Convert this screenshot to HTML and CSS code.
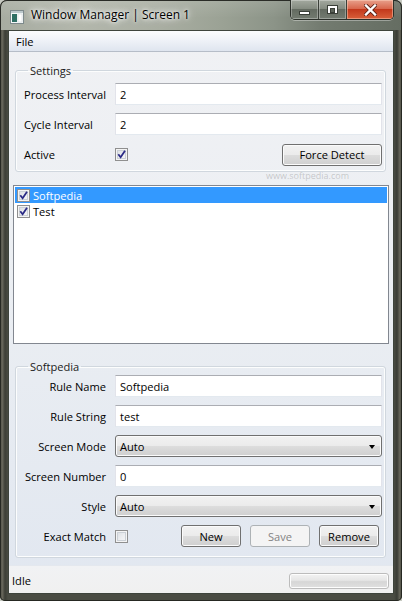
FILE: index.html
```html
<!DOCTYPE html>
<html>
<head>
<meta charset="utf-8">
<title>Window Manager | Screen 1</title>
<link rel="stylesheet" href="styles.css">
</head>
<body>
<div class="window">
  <div class="titlebar">
    <svg class="appicon" width="14" height="14" viewBox="0 0 14 14">
      <rect x="0.5" y="0.5" width="13" height="13" fill="#f4f7f8" stroke="#7d8a8c"/>
      <rect x="1" y="1" width="12" height="2" fill="#bcc8cc"/>
      <rect x="2" y="4" width="5" height="8" fill="#2f6f64"/>
      <rect x="8" y="4" width="4" height="8" fill="#ffffff" stroke="#c9d3d6" stroke-width="0.5"/>
    </svg>
    <span class="title">Window Manager | Screen 1</span>
    <div class="caption">
      <div class="cbtn min"><span class="glyph-min"></span></div>
      <div class="cbtn max"><span class="glyph-max"></span></div>
      <div class="cbtn close">
        <svg width="13" height="12" viewBox="0 0 13 12">
          <path d="M2 1.5 L11 10.5 M11 1.5 L2 10.5" stroke="#5b2217" stroke-width="4" stroke-linecap="square"/>
          <path d="M2 1.5 L11 10.5 M11 1.5 L2 10.5" stroke="#ffffff" stroke-width="2.4" stroke-linecap="square"/>
        </svg>
      </div>
    </div>
  </div>

  <div class="client">
    <div class="menubar"><span class="menuitem">File</span></div>

    <div class="content">
      <fieldset class="group settings">
        <legend>Settings</legend>
        <div class="form">
          <span class="label">Process Interval</span>
          <div class="textbox">2</div>
          <span class="label">Cycle Interval</span>
          <div class="textbox">2</div>
          <span class="label">Active</span>
          <div class="cellrow">
            <span class="check"><svg width="9" height="9" viewBox="0 0 9 9"><path d="M1.3 4.3 L3.6 7.2 L8 0.8" fill="none" stroke="#2b2b86" stroke-width="1.8"/></svg></span>
            <span class="btn force">Force Detect</span>
          </div>
        </div>
      </fieldset>

      <div class="listbox">
        <div class="item selected">
          <span class="check"><svg width="9" height="9" viewBox="0 0 9 9"><path d="M1.3 4.3 L3.6 7.2 L8 0.8" fill="none" stroke="#2b2b86" stroke-width="1.8"/></svg></span>
          <span>Softpedia</span>
        </div>
        <div class="item">
          <span class="check"><svg width="9" height="9" viewBox="0 0 9 9"><path d="M1.3 4.3 L3.6 7.2 L8 0.8" fill="none" stroke="#2b2b86" stroke-width="1.8"/></svg></span>
          <span>Test</span>
        </div>
      </div>

      <fieldset class="group rule">
        <legend>Softpedia</legend>
        <div class="form right">
          <span class="label">Rule Name</span>
          <div class="textbox">Softpedia</div>
          <span class="label">Rule String</span>
          <div class="textbox">test</div>
          <span class="label">Screen Mode</span>
          <div class="combo"><span>Auto</span><span class="arrow"></span></div>
          <span class="label">Screen Number</span>
          <div class="textbox">0</div>
          <span class="label">Style</span>
          <div class="combo"><span>Auto</span><span class="arrow"></span></div>
          <span class="label">Exact Match</span>
          <div class="cellrow">
            <span class="check"></span>
            <div class="buttons">
              <span class="btn">New</span>
              <span class="btn disabled">Save</span>
              <span class="btn">Remove</span>
            </div>
          </div>
        </div>
      </fieldset>
    </div>

    <div class="statusbar">
      <span>Idle</span>
      <div class="progress"></div>
    </div>
  </div>
  <span class="watermark">www.softpedia.com</span>
</div>
</body>
</html>
```

FILE: styles.css
```css
* { box-sizing: border-box; }
html, body { margin: 0; padding: 0; }
body {
  width: 402px;
  height: 601px;
  overflow: hidden;
  background: #c7cac2;
  font-family: "Open Sans", "Noto Sans", "Liberation Sans", sans-serif;
  font-size: 11.1px;
  line-height: 15px;
  color: #000;
}

.window {
  position: relative;
  width: 402px;
  height: 601px;
  display: flex;
  flex-direction: column;
  padding: 0 8px 7px;
  border-radius: 7px 7px 5px 5px;
  background: linear-gradient(to right, #2f302a 0, #6d6c60 2px, #3c3e36 5px, #4a4c43 8px, #4a4c43 394px, #3a3c35 397px, #6a695d 400px, #2f302a 402px);
  box-shadow: inset 0 0 0 1px #262822;
  overflow: hidden;
}

/* ---------- title bar ---------- */
.titlebar {
  height: 30px;
  margin: 0 -8px;
  padding: 0 8px;
  display: flex;
  align-items: flex-start;
  border-radius: 7px 7px 0 0;
  background:
    linear-gradient(to bottom, rgba(255,255,255,0.12), rgba(0,0,0,0) 60%),
    linear-gradient(to right, #a7aca1 0%, #b3b7ac 20%, #a9aea2 40%, #9ba295 55%, #8c9488 68%, #737b70 80%, #656d62 100%);
  box-shadow: inset 0 1px 0 #2a2c27, inset 1px 0 0 #2a2c27, inset -1px 0 0 #2a2c27;
}
.appicon { margin: 10px 0 0 2px; flex: none; }
.title {
  margin: 7px 0 0 7px;
  font-size: 12px;
  line-height: 16px;
  color: #000;
  text-shadow: 0 0 6px rgba(255,255,255,0.95), 0 0 10px rgba(255,255,255,0.8), 0 0 3px rgba(255,255,255,0.9);
}
.caption {
  margin-left: auto;
  display: flex;
  height: 20px;
  border: 1px solid #2c302a;
  border-top: none;
  border-radius: 0 0 5px 5px;
  overflow: hidden;
  box-shadow: 0 1px 0 rgba(255,255,255,0.35);
}
.cbtn {
  height: 100%;
  display: flex;
  align-items: center;
  justify-content: center;
}
.cbtn.min, .cbtn.max {
  width: 28px;
  background: linear-gradient(to bottom, #a3a99f 0%, #858c81 45%, #646b61 50%, #737b70 100%);
  border-right: 1px solid #3b4039;
  box-shadow: inset 0 0 0 1px rgba(255,255,255,0.3);
}
.cbtn.close {
  width: 46px;
  background: linear-gradient(to bottom, #e8a08b 0%, #d8684e 45%, #c3391c 50%, #d9603a 100%);
  box-shadow: inset 0 0 0 1px rgba(255,220,200,0.45);
}
.glyph-min {
  width: 11px;
  height: 4px;
  margin-top: 7px;
  background: #fff;
  border: 1px solid #3a3f38;
}
.glyph-max {
  width: 11px;
  height: 9px;
  border: 1px solid #3a3f38;
  background: #fff;
  box-shadow: inset 0 0 0 1px #fff;
}
.glyph-max::after {
  content: "";
  display: block;
  margin: 2px 2px 0;
  height: 3px;
  background: #5d645a;
  border: 1px solid #3a3f38;
}

/* ---------- client ---------- */
.client {
  flex: 1;
  display: flex;
  flex-direction: column;
  border: 1px solid #3e443c;
  background: linear-gradient(to bottom, #f0f1f4 0%, #eceff3 40%, #e1e7f0 100%);
}
.menubar {
  height: 21px;
  flex: none;
  padding-left: 7px;
  display: flex;
  align-items: center;
  background: linear-gradient(to bottom, #fbfcfd 0%, #eef1f7 50%, #dfe5ef 100%);
  border-bottom: 1px solid #b6bdc8;
}

.content {
  display: flex;
  flex-direction: column;
}

/* group boxes */
.group {
  margin: 0 7px 0 6px;
  padding: 0;
  border: 1px solid #d0d7de;
  border-radius: 3px;
  box-shadow: inset 0 0 0 1px #fcfdfd;
  min-width: 0;
}
.group legend {
  margin-left: 4px;
  padding: 0 2px;
  line-height: 15px;
  color: #1a1a1a;
}
.group.settings { margin-top: 11px; padding: 5px 0 6px 8px; }
.group.rule { margin-top: 15px; padding: 1px 0 10px 8px; }

.form {
  display: grid;
  grid-template-columns: 91px 267px;
  grid-auto-rows: 22px;
  row-gap: 8px;
  align-items: center;
}
.label { white-space: nowrap; }
.settings .form > :nth-child(5), .settings .form > :nth-child(6) { margin-top: 1px; }
.form.right .label { text-align: right; padding-right: 9px; direction: rtl; }

.textbox {
  height: 22px;
  padding: 0 4px;
  display: flex;
  align-items: center;
  background: #fff;
  border: 1px solid #e2e3ea;
  border-top-color: #abadb3;
  border-bottom-color: #e3e9ef;
}

.cellrow {
  height: 22px;
  display: flex;
  align-items: center;
  justify-content: space-between;
}

.check {
  width: 13px;
  height: 13px;
  flex: none;
  display: flex;
  align-items: center;
  justify-content: center;
  border: 1px solid #8f8f8f;
  box-shadow: inset 0 0 0 1px #f4f4f4, inset 0 0 0 2px #cbd0d6;
  background-image: linear-gradient(135deg, #d7dbe1 0%, #eeeff1 60%, #f7f7f8 100%);
}
.check svg { display: block; }

.btn {
  height: 22px;
  display: flex;
  align-items: center;
  justify-content: center;
  border: 1px solid #707070;
  border-radius: 3px;
  background: linear-gradient(to bottom, #f2f2f2 0%, #ebebeb 50%, #dddddd 50%, #cfcfcf 100%);
  box-shadow: inset 0 0 0 1px #fbfbfb;
}
.btn.force { width: 100px; }
.btn.disabled {
  border-color: #adb2b5;
  background: #f4f4f4;
  color: #838383;
  box-shadow: none;
}
.buttons {
  display: flex;
  gap: 9px;
  padding-right: 3px;
}
.buttons .btn { width: 60px; }

.combo {
  height: 22px;
  display: flex;
  align-items: center;
  justify-content: space-between;
  padding: 0 6px 0 4px;
  border: 1px solid #707070;
  border-radius: 3px;
  background: linear-gradient(to bottom, #f2f2f2 0%, #ebebeb 50%, #dddddd 50%, #cfcfcf 100%);
  box-shadow: inset 0 0 0 1px #fbfbfb;
}
.arrow {
  width: 0;
  height: 0;
  border-left: 3.5px solid transparent;
  border-right: 3.5px solid transparent;
  border-top: 4px solid #000;
  margin-top: 1px;
}

/* list box */
.listbox {
  margin: 13px 4px 0;
  height: 159px;
  padding: 1px;
  background: #fff;
  border: 1px solid #828790;
}
.item {
  height: 16px;
  display: flex;
  align-items: center;
  gap: 3px;
  padding-left: 2px;
}
.item.selected { background: #3399ff; color: #fff; }

/* status bar */
.statusbar {
  margin-top: auto;
  height: 28px;
  flex: none;
  display: flex;
  align-items: center;
  justify-content: space-between;
  padding: 2px 4px 0 3px;
  background: linear-gradient(to bottom, #f1f2f4, #f0f0f0);
  border-top: 1px solid #e4e8ee;
}
.progress {
  width: 100px;
  height: 16px;
  border: 1px solid #bcbcbc;
  border-radius: 3px;
  background: linear-gradient(to bottom, #f3f3f3 0%, #e6e6e6 45%, #d6d6d6 55%, #e0e0e0 100%);
  box-shadow: inset 0 0 0 1px #fdfdfd;
}

.watermark {
  position: absolute;
  left: 266px;
  top: 170px;
  font-size: 9px;
  line-height: 12px;
  color: rgba(120,120,120,0.35);
}
```
